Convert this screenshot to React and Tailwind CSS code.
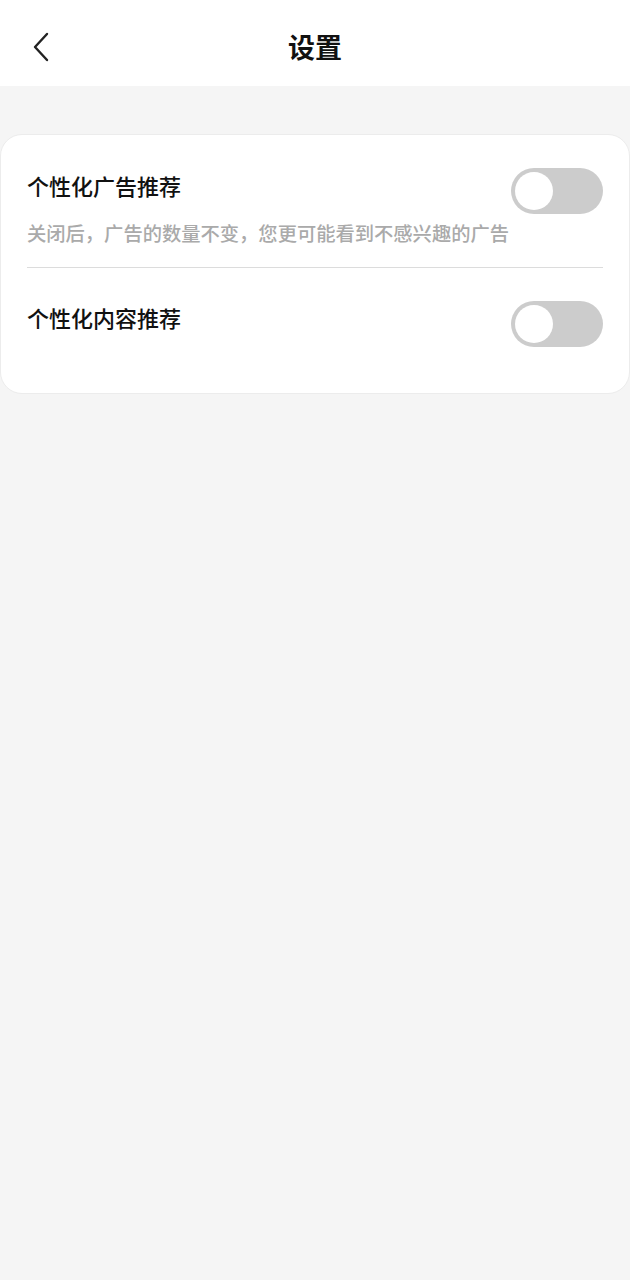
import React, { useState } from "react";

function Toggle({ on, onChange }) {
  return (
    <button
      onClick={() => onChange(!on)}
      className={`flex h-[46px] w-[92px] shrink-0 items-center rounded-full p-[4px] ${
        on ? "bg-[#fb3d3d] justify-end" : "bg-[#cccccc] justify-start"
      }`}
    >
      <span className="block h-[38px] w-[38px] rounded-full bg-white" />
    </button>
  );
}

export default function App() {
  const [ad, setAd] = useState(false);
  const [content, setContent] = useState(false);

  return (
    <div
      className="min-h-[1280px] w-[630px] bg-[#f5f5f5] text-[#111]"
      style={{ fontFamily: '"Noto Sans CJK SC", "Noto Sans", sans-serif' }}
    >
      {/* header */}
      <div className="relative flex h-[86px] items-center justify-center bg-white">
        <button className="absolute left-[26px] top-[27px] p-1">
          <svg width="22" height="32" viewBox="0 0 22 32" fill="none">
            <path d="M17 3 L5 16 L17 29" stroke="#222" strokeWidth="2.4" strokeLinecap="round" strokeLinejoin="round" />
          </svg>
        </button>
        <h1 className="mt-[6px] text-[27px] font-bold leading-none">设置</h1>
      </div>

      {/* settings card */}
      <div className="mt-[48px] rounded-[22px] border border-[#ececec] bg-white px-[26px]">
        <div className="pb-[19px] pt-[33px]">
          <div className="flex items-center justify-between">
            <span className="mb-[12px] text-[22px] font-medium">个性化广告推荐</span>
            <Toggle on={ad} onChange={setAd} />
          </div>
          <p className="mt-[5px] text-[19.3px] font-medium text-[#aaaaaa]">
            关闭后，广告的数量不变，您更可能看到不感兴趣的广告
          </p>
        </div>
        <div className="h-px bg-[#dcdcdc]" />
        <div className="flex items-center justify-between pb-[46px] pt-[33px]">
          <span className="mb-[12px] text-[22px] font-medium">个性化内容推荐</span>
          <Toggle on={content} onChange={setContent} />
        </div>
      </div>
    </div>
  );
}
